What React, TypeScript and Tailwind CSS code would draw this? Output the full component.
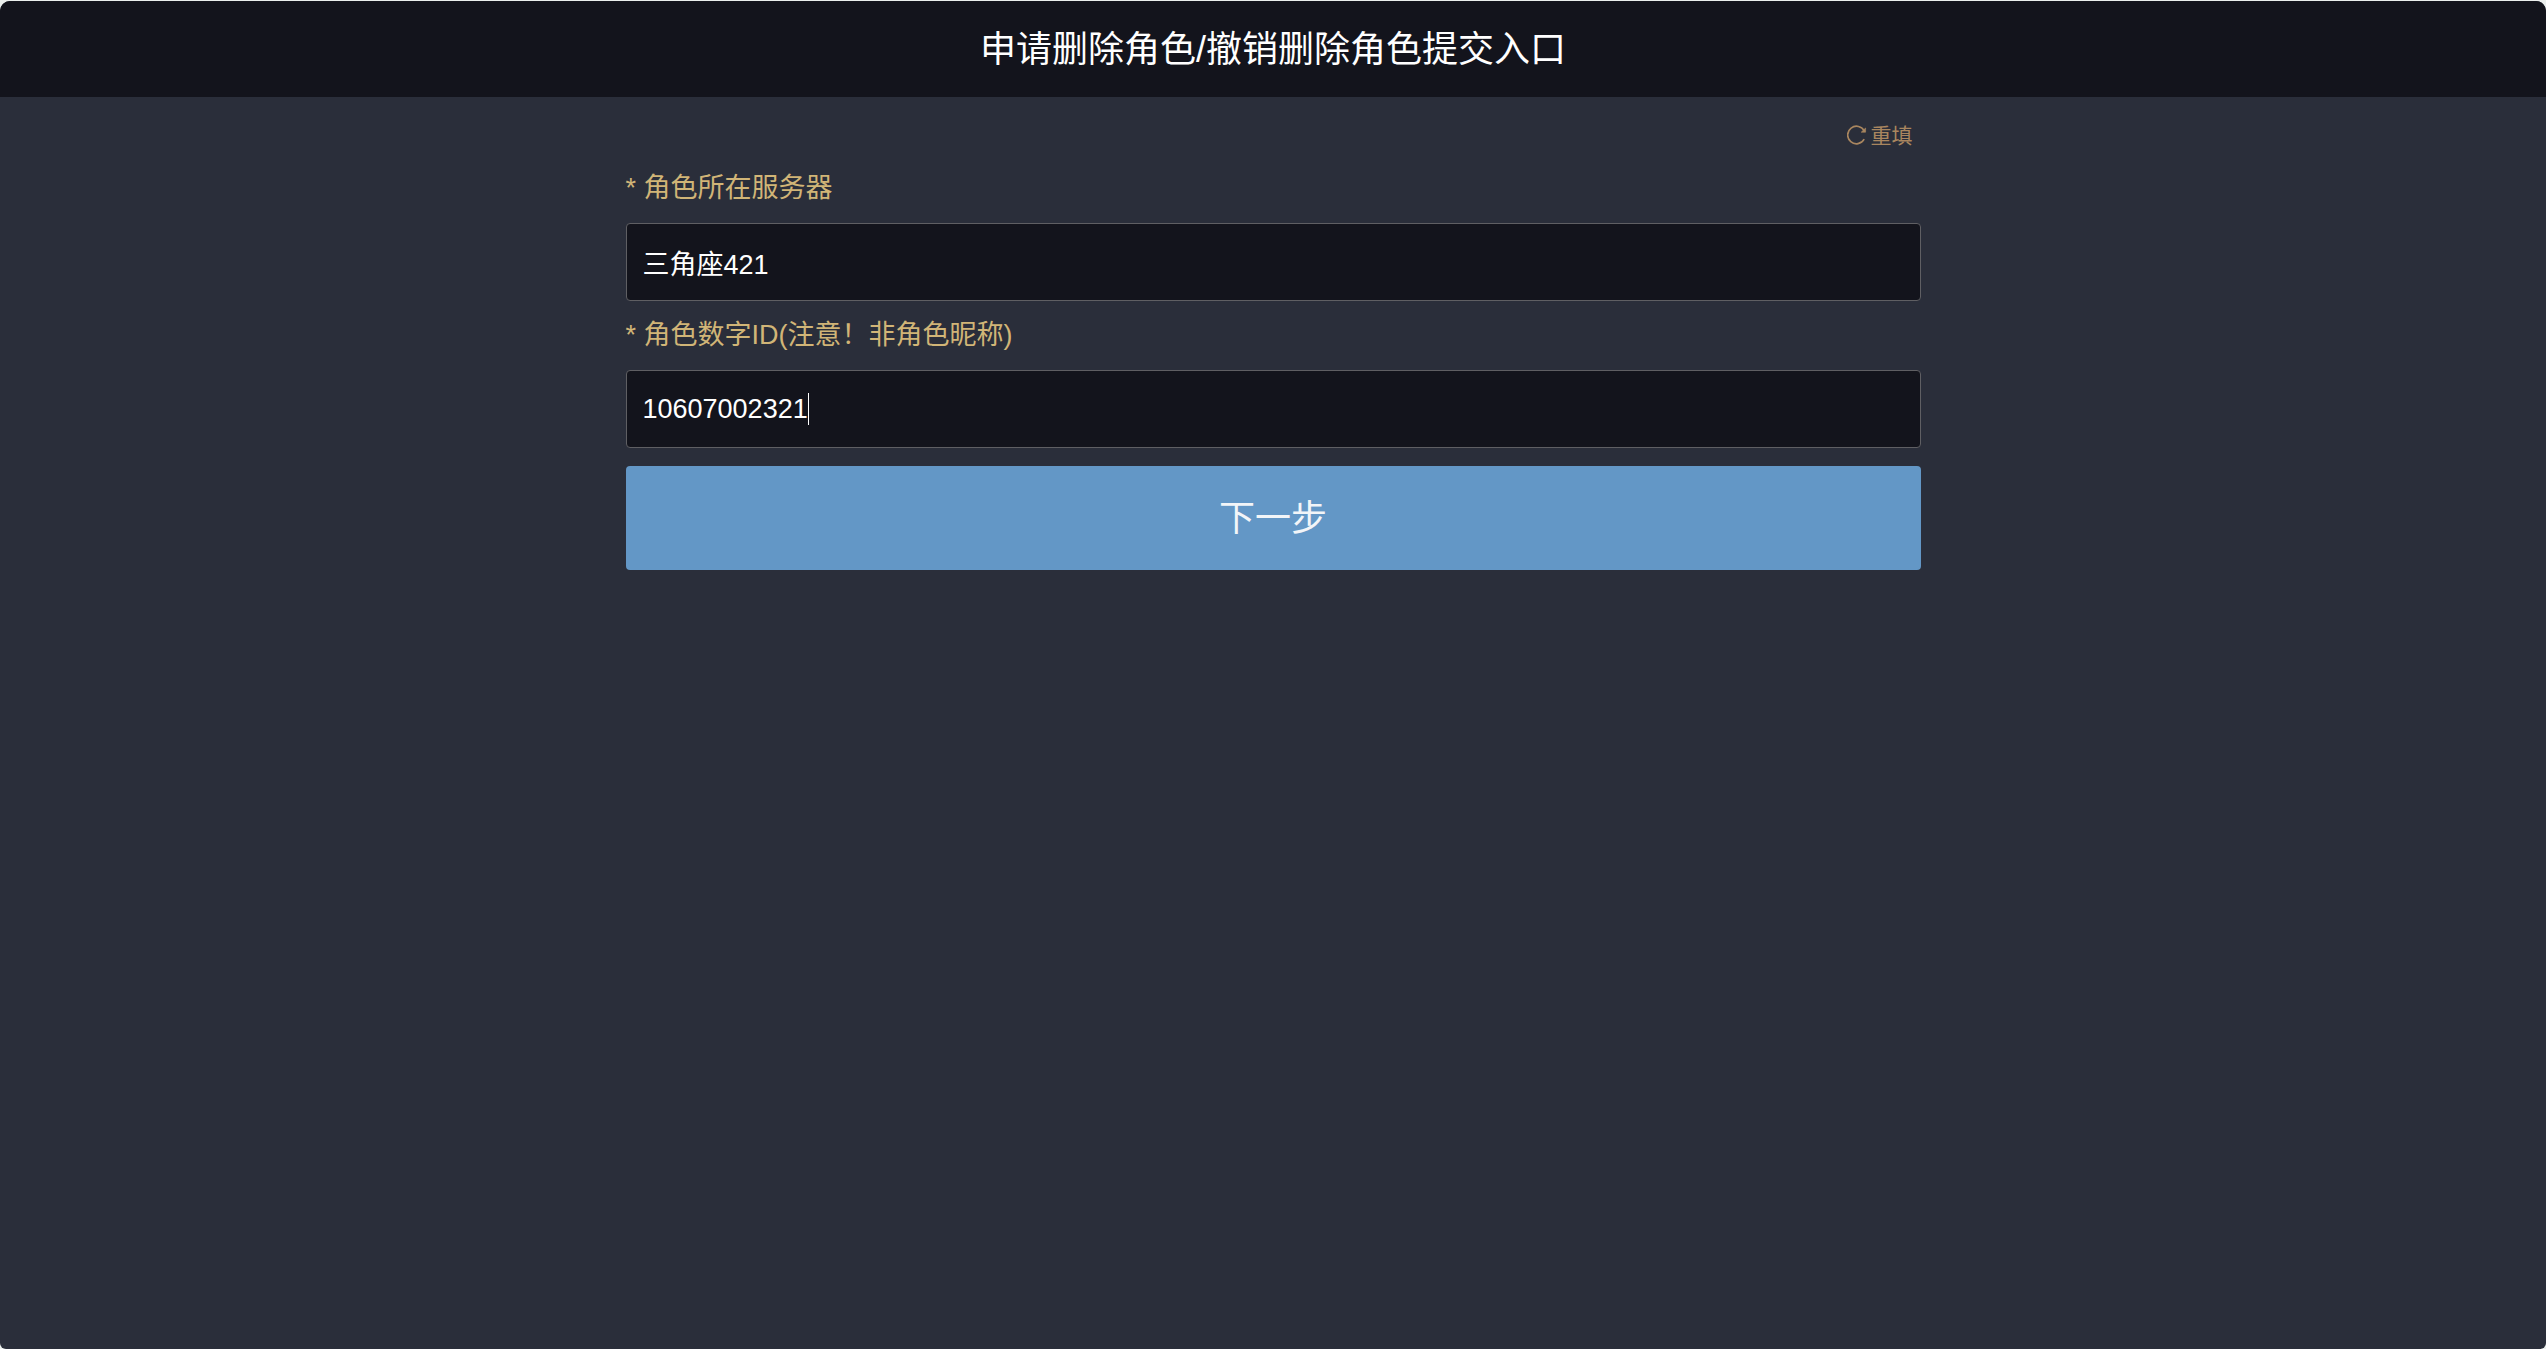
import React, { useState } from "react";

function RefreshIcon() {
  return (
    <svg viewBox="0 0 20 20" className="size-5" fill="none" stroke="currentColor" strokeWidth="1.6" aria-hidden="true">
      <path d="M17.2 14.2A8.8 8.8 0 1 1 17.4 6.2" />
      <path d="M18.6 3V7.2H14.2z" fill="currentColor" strokeWidth="0.6" />
    </svg>
  );
}

type FieldProps = {
  id: string;
  label: string;
  value: string;
  onChange: (value: string) => void;
  active?: boolean;
};

function Field({ id, label, value, onChange, active }: FieldProps) {
  return (
    <div className="flex flex-col">
      <label htmlFor={id} className="text-[27px] leading-[69px] text-[#d1b577]">
        * {label}
      </label>
      <div className="flex h-[78px] items-center rounded-[4px] border border-[#5f5f63] bg-[#13141c] px-4">
        <input
          id={id}
          type="text"
          required
          value={value}
          onChange={(e) => onChange(e.target.value)}
          className={`h-full bg-transparent text-[27px] text-white caret-transparent outline-none ${active ? "field-sizing-content" : "w-full"}`}
        />
        {active && <span className="h-8 w-px bg-white" />}
      </div>
    </div>
  );
}

export default function App() {
  const [server, setServer] = useState("三角座421");
  const [roleId, setRoleId] = useState("10607002321");

  const reset = () => {
    setServer("");
    setRoleId("");
  };

  return (
    <div className="flex min-h-screen flex-col bg-[#ebefed] pt-px font-['Liberation_Sans','Noto_Sans_CJK_SC',sans-serif]">
      <div className="flex flex-1 flex-col overflow-hidden rounded-t-[10px] rounded-b-[6px] bg-[#2a2e3a]">
        <header className="flex h-24 items-center justify-center bg-[#13141c] pt-0.5">
          <h1 className="text-[36px] leading-none text-white">申请删除角色/撤销删除角色提交入口</h1>
        </header>

        <main className="mx-auto w-full max-w-[1295px]">
          <div className="flex h-[57px] items-end justify-end pr-2 pb-[3px]">
            <button type="button" onClick={reset} className="flex items-center gap-1 text-[21px] text-[#a9865f]">
              <RefreshIcon />
              重填
            </button>
          </div>
          <form className="flex flex-col" onSubmit={(e) => e.preventDefault()}>
            <Field id="server" label="角色所在服务器" value={server} onChange={setServer} />
            <Field id="role-id" label="角色数字ID(注意！非角色昵称)" value={roleId} onChange={setRoleId} active />
            <button type="submit" className="mt-[18px] h-[104px] rounded-[4px] bg-[#6397c6] pt-0.5 text-[36px] text-[#f2f5f8]">
              下一步
            </button>
          </form>
        </main>
      </div>
    </div>
  );
}
